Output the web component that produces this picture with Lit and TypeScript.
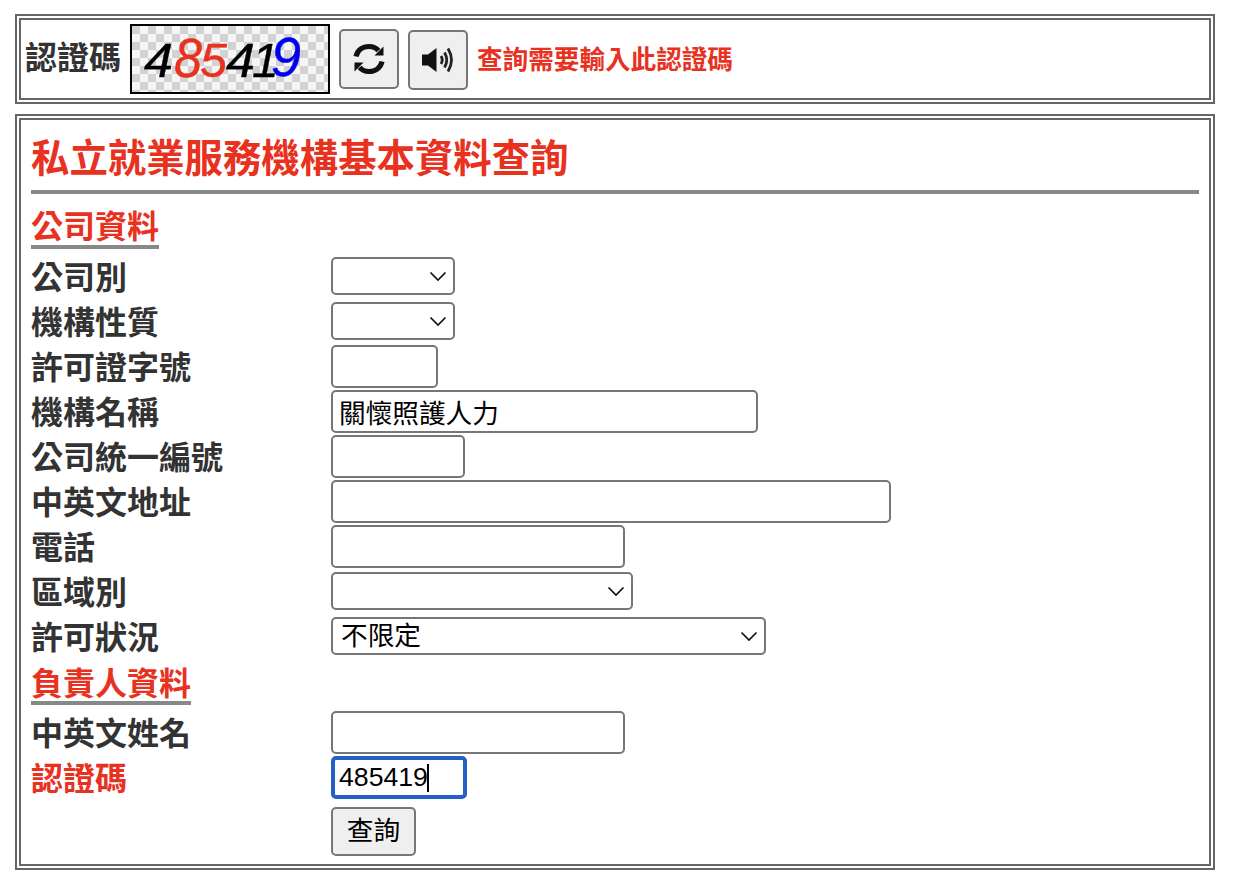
import { LitElement, html, css } from "lit";
import { customElement } from "lit/decorators.js";

@customElement("app-root")
export class AppRoot extends LitElement {
  static styles = css`
    :host { display: block; font-family: "Liberation Sans", "Noto Sans CJK TC", sans-serif; color: #333; background: #fff; padding: 14px 23px 22px 15px; height: 856px; box-sizing: content-box; }
    .box { border: 6px double #666; box-sizing: border-box; }
    .captcha { height: 90px; display: flex; align-items: center; padding-left: 4px; margin-bottom: 10px; }
    .captcha-label { font-size: 32px; font-weight: 700; width: 105px; flex: none; line-height: 40px; margin-top: -2px; }
    .captcha-img { width: 200px; height: 70px; border: 2px solid #000; box-sizing: border-box; flex: none; display: block; background: #fff; }
    .soft { filter: blur(0.6px); }
    .icon { filter: blur(0.5px); display: block; }
    .icon-btn { width: 60px; height: 60px; border: 2px solid #767676; border-radius: 5px; background: #efefef; box-sizing: border-box; padding: 0; margin-left: 9px; display: flex; align-items: center; justify-content: center; flex: none; }
    .speaker { margin-top: 2px; }
    .hint { color: #e8321f; font-size: 25.6px; font-weight: 700; margin-left: 9px; line-height: 32px; margin-top: 2px; }
    .main { height: 756px; padding: 10px 10px 0; }
    h1 { margin: 0; color: #e8321f; font-size: 38.4px; line-height: 57px; height: 60px; font-weight: 700; border-bottom: 4px solid #888; box-sizing: content-box; }
    .section { display: block; margin: 0; height: 55px; }
    .section span { display: inline-block; color: #e8321f; font-size: 32px; font-weight: 700; line-height: 42px; border-bottom: 4px solid #888; box-sizing: border-box; height: 55px; padding-top: 12px; }
    .sec2 { height: 46px; }
    .sec2 span { height: 46px; padding-top: 4px; }
    .gap { height: 5px; }
    .row { display: flex; align-items: center; height: 45px; }
    .label { width: 300px; flex: none; font-size: 32px; font-weight: 700; line-height: 42px; padding-top: 2px; box-sizing: border-box; height: 44px; }
    .req { color: #e8321f; }
    input { font: 26.67px "Liberation Sans", "Noto Sans CJK TC", sans-serif; color: #000; height: 43px; border: 2px solid #767676; border-radius: 5px; box-sizing: border-box; padding: 0 6px; margin: 0; background: #fff; outline: none; display: block; }
    input.focus { border: 4px solid #2360c8; padding: 0 4px; }
    .sel { position: relative; display: block; margin-bottom: 2px; }
    select { font: 26.67px "Liberation Sans", "Noto Sans CJK TC", sans-serif; color: #000; appearance: none; -webkit-appearance: none; display: block; height: 38px; border: 2px solid #767676; border-radius: 5px; box-sizing: border-box; padding: 0 8px; margin: 0; background: #fff; outline: none; line-height: 34px; }
    .chev { position: absolute; right: 8px; top: 50%; margin-top: -5px; width: 18px; height: 11px; pointer-events: none; }
    .caret-wrap { position: relative; display: block; }
    .caret { position: absolute; left: 96px; top: 8px; width: 2px; height: 28px; background: #000; }
    .submit-row { padding-left: 300px; height: 52px; padding-top: 7px; }
    button.submit { font: 26.67px "Liberation Sans", "Noto Sans CJK TC", sans-serif; line-height: 41px; color: #000; width: 85px; height: 49px; border: 2px solid #767676; border-radius: 5px; background: #efefef; padding: 0 0 1px; margin: 0; display: block; }
  `;

  private chev() {
    return html`<svg class="chev" viewBox="0 0 18 11"><path d="M1.5 1.5 L9 9 L16.5 1.5" fill="none" stroke="#111" stroke-width="1.7"/></svg>`;
  }

  private sel(w: number, text = "") {
    return html`<span class="sel"><select style="width:${w}px"><option>${text}</option></select>${this.chev()}</span>`;
  }

  private inp(w: number, v = "") {
    return html`<input type="text" style="width:${w}px" .value=${v} />`;
  }

  render() {
    return html`
      <div class="box captcha">
        <div class="captcha-label">認證碼</div>
        <svg class="captcha-img" viewBox="0 0 196 66">
          <defs>
            <pattern id="chk" width="16" height="16" patternUnits="userSpaceOnUse">
              <rect width="16" height="16" fill="#f6f6f6"/>
              <rect width="8" height="8" fill="#d2d2d2"/>
              <rect x="8" y="8" width="8" height="8" fill="#d2d2d2"/>
            </pattern>
          </defs>
          <g class="soft" font-family="Liberation Sans, sans-serif" font-style="italic" font-size="48" stroke-width="0.4">
            <rect width="196" height="66" fill="url(#chk)"/>
            <text x="12" y="51" fill="#000" stroke="#000" textLength="29" lengthAdjust="spacingAndGlyphs">4</text>
            <text x="42" y="51" fill="#e8321f" stroke="#e8321f" font-size="55" textLength="28" lengthAdjust="spacingAndGlyphs">8</text>
            <text x="68" y="51" fill="#e8321f" stroke="#e8321f" textLength="27" lengthAdjust="spacingAndGlyphs">5</text>
            <text x="94" y="51" fill="#000" stroke="#000" textLength="29" lengthAdjust="spacingAndGlyphs">4</text>
            <text x="120" y="51" fill="#000" stroke="#000">1</text>
            <text x="139" y="50" fill="#0000ee" stroke="#0000ee" font-size="56" textLength="30" lengthAdjust="spacingAndGlyphs">9</text>
          </g>
        </svg>
        <button class="icon-btn">
          <svg class="icon" width="34" height="34" viewBox="0 0 34 34">
            <path d="M4 14.5 C5.5 8 10.5 4.5 17 4.5 C21 4.5 24.2 6 26.4 8.6" fill="none" stroke="#111" stroke-width="5.2"/>
            <path d="M22.5 13.5 L31.5 13.5 L31.5 4.5 Z" fill="#111"/>
            <path d="M30 19.5 C28.5 26 23.5 29.5 17 29.5 C13 29.5 9.8 28 7.6 25.4" fill="none" stroke="#111" stroke-width="5.2"/>
            <path d="M11.5 20.5 L2.5 20.5 L2.5 29.5 Z" fill="#111"/>
          </svg>
        </button>
        <button class="icon-btn speaker">
          <svg class="icon" width="36" height="30" viewBox="0 0 36 30">
            <path d="M2 9.5 H8 L16.5 3 V27 L8 20.5 H2 Z" fill="#111"/>
            <path d="M21 11 Q23.5 15 21 19" fill="none" stroke="#222" stroke-width="2.8"/>
            <path d="M24.5 7.5 Q29 15 24.5 22.5" fill="none" stroke="#222" stroke-width="2.8"/>
            <path d="M28 3.5 Q35 15 28 26.5" fill="none" stroke="#222" stroke-width="2.8"/>
          </svg>
        </button>
        <div class="hint">查詢需要輸入此認證碼</div>
      </div>

      <div class="box main">
        <h1>私立就業服務機構基本資料查詢</h1>
        <div class="section"><span>公司資料</span></div>
        <div class="gap"></div>
        <div class="row"><div class="label">公司別</div>${this.sel(124)}</div>
        <div class="row"><div class="label">機構性質</div>${this.sel(124)}</div>
        <div class="row"><div class="label">許可證字號</div>${this.inp(107)}</div>
        <div class="row"><div class="label">機構名稱</div>${this.inp(427, "關懷照護人力")}</div>
        <div class="row"><div class="label">公司統一編號</div>${this.inp(134)}</div>
        <div class="row"><div class="label">中英文地址</div>${this.inp(560)}</div>
        <div class="row"><div class="label">電話</div>${this.inp(294)}</div>
        <div class="row"><div class="label">區域別</div>${this.sel(302)}</div>
        <div class="row"><div class="label">許可狀況</div>${this.sel(435, "不限定")}</div>
        <div class="section sec2"><span>負責人資料</span></div>
        <div class="gap"></div>
        <div class="row"><div class="label">中英文姓名</div>${this.inp(294)}</div>
        <div class="row"><div class="label req">認證碼</div><span class="caret-wrap"><input class="focus" type="text" style="width:136px" .value=${"485419"} /><span class="caret"></span></span></div>
        <div class="submit-row"><button class="submit">查詢</button></div>
      </div>
    `;
  }
}
